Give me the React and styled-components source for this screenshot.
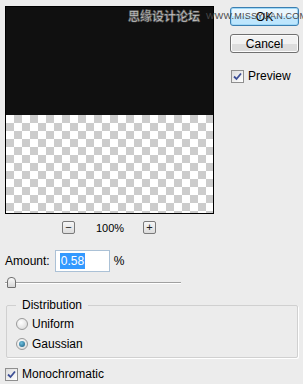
import styled, { createGlobalStyle } from "styled-components";

const GlobalStyle = createGlobalStyle`
  html, body {
    margin: 0;
    padding: 0;
    background: #ececec;
  }
  body {
    font-family: "Liberation Sans", Arial, sans-serif;
    font-size: 12px;
    color: #000;
  }
`;

const Dialog = styled.div`
  position: relative;
  width: 303px;
  height: 384px;
  box-sizing: border-box;
  padding: 6px 4px 0 5px;
  overflow: hidden;
`;

const TopRow = styled.div`
  display: flex;
  align-items: flex-start;
`;

const LeftCol = styled.div`
  width: 209px;
`;

const Preview = styled.div`
  width: 209px;
  height: 208px;
  box-sizing: border-box;
  border: 1px solid #000;
  display: flex;
  flex-direction: column;
`;

const Dark = styled.div`
  flex: 0 0 108px;
  background: #101010;
`;

const Checker = styled.div`
  flex: 1;
  background-color: #fff;
  background-image: conic-gradient(
    #cccccc 0 25%,
    #fff 0 50%,
    #cccccc 0 75%,
    #fff 0
  );
  background-size: 16px 16px;
`;

const ZoomBar = styled.div`
  display: flex;
  align-items: center;
  margin-top: 7px;
  padding-left: 57px;
  height: 13px;
`;

const ZoomButton = styled.div`
  width: 13px;
  height: 13px;
  box-sizing: border-box;
  border: 1px solid #7a7a7a;
  border-radius: 2px;
  background: linear-gradient(#f6f6f6, #dcdcdc);
  display: flex;
  align-items: center;
  justify-content: center;
  font-size: 11px;
  line-height: 1;
  color: #222;
  margin-right: ${(p) => p.gap || 0}px;
`;

const ZoomText = styled.span`
  font-size: 11px;
  width: 25px;
  margin-right: 22px;
  text-align: center;
`;

const RightCol = styled.div`
  display: flex;
  flex-direction: column;
  margin-left: 16px;
  padding-top: 1px;
  width: 70px;
`;

const Button = styled.div`
  height: 19px;
  box-sizing: border-box;
  border: 1px solid ${(p) => (p.primary ? "#3c7fb1" : "#707070")};
  border-radius: 3px;
  background: ${(p) =>
    p.primary
      ? "linear-gradient(#eaf6fd 0 50%, #bee6fd 50%)"
      : "linear-gradient(#f2f2f2 0 50%, #dddddd 50% 90%, #cfcfcf)"};
  box-shadow: ${(p) => (p.primary ? "inset 0 0 0 1px #9ed8f7" : "inset 0 0 0 1px #fcfcfc")};
  display: flex;
  align-items: center;
  justify-content: center;
  font-size: 12px;
  margin-bottom: 8px;
`;

const CheckRow = styled.label`
  display: flex;
  align-items: center;
  gap: 4px;
  margin: ${(p) => p.m || "0"};
  height: 14px;
`;

const Box = styled.span`
  width: 13px;
  height: 13px;
  box-sizing: border-box;
  border: 1px solid #8f8f8f;
  background: linear-gradient(135deg, #dcdcdc, #fff);
  display: flex;
  align-items: center;
  justify-content: center;
`;

const Check = () => (
  <Box>
    <svg width="9" height="9" viewBox="0 0 9 9">
      <path d="M1 4.5 L3.5 7 L8 1.5" stroke="#3d4f96" strokeWidth="1.8" fill="none" />
    </svg>
  </Box>
);

const AmountRow = styled.div`
  display: flex;
  align-items: center;
  margin-top: 16px;
`;

const Field = styled.div`
  width: 55px;
  height: 22px;
  box-sizing: border-box;
  margin-left: 5px;
  border: 1px solid #abc1d6;
  background: #fff;
  display: flex;
  align-items: center;
  padding-left: 4px;
`;

const Selected = styled.span`
  background: #3399ff;
  color: #fff;
  padding: 1px 1px;
  line-height: 14px;
`;

const Unit = styled.span`
  margin-left: 4px;
`;

const Slider = styled.div`
  position: relative;
  width: 176px;
  height: 12px;
  margin-top: 5px;
`;

const Track = styled.div`
  position: absolute;
  left: 0;
  right: 0;
  top: 5px;
  height: 2px;
  border-top: 1px solid #a0a0a0;
  background: #fff;
  box-sizing: border-box;
`;

const Thumb = styled.div`
  position: absolute;
  left: 2px;
  top: 0;
  width: 9px;
  height: 11px;
  box-sizing: border-box;
  border: 1px solid #707070;
  border-radius: 4px 4px 1px 1px;
  background: linear-gradient(#fafafa, #d6d6d6);
`;

const Group = styled.fieldset`
  margin: 9px 1px 0 1px;
  padding: 2px 8px 3px 9px;
  border: 1px solid #d0d0d0;
  box-shadow: 1px 1px 0 #fff;
  border-radius: 2px;
`;

const Legend = styled.legend`
  padding: 0 6px;
  font-size: 12px;
`;

const RadioRow = styled.div`
  display: flex;
  align-items: center;
  gap: 4px;
  height: 20px;
`;

const Radio = styled.span`
  width: 12px;
  height: 12px;
  box-sizing: border-box;
  border-radius: 50%;
  border: 1px solid #9a9a9a;
  background: radial-gradient(circle at 40% 35%, #fff, #d4d4d4);
  display: flex;
  align-items: center;
  justify-content: center;

  &::after {
    content: "";
    display: ${(p) => (p.on ? "block" : "none")};
    width: 6px;
    height: 6px;
    border-radius: 50%;
    background: radial-gradient(circle at 40% 35%, #6fc0de, #16597d);
  }
`;

const Watermark = styled.div`
  position: absolute;
  z-index: 2;
  left: 128px;
  top: 7px;
  width: 172px;
  display: flex;
  align-items: center;
  gap: 6px;
  white-space: nowrap;
  pointer-events: none;
`;

const WmCn = styled.span`
  flex-shrink: 0;
  font-family: "Noto Sans CJK SC", sans-serif;
  font-size: 12px;
  font-weight: 700;
  color: #c8c8c8;
  -webkit-text-stroke: 0.6px #5a5a5a;
`;

const WmEn = styled.span`
  flex-shrink: 0;
  font-family: "Liberation Sans", Arial, sans-serif;
  font-size: 9px;
  color: #4a4a4a;
  letter-spacing: 0.2px;
`;

export default function App() {
  return (
    <>
      <GlobalStyle />
      <Dialog>
        <TopRow>
          <LeftCol>
            <Preview>
              <Dark />
              <Checker />
            </Preview>
            <ZoomBar>
              <ZoomButton gap={21}>−</ZoomButton>
              <ZoomText>100%</ZoomText>
              <ZoomButton>+</ZoomButton>
            </ZoomBar>
          </LeftCol>
          <RightCol>
            <Button primary>OK</Button>
            <Button>Cancel</Button>
            <CheckRow m="8px 0 0 1px">
              <Check />
              Preview
            </CheckRow>
          </RightCol>
        </TopRow>

        <AmountRow>
          Amount:
          <Field>
            <Selected>0.58</Selected>
          </Field>
          <Unit>%</Unit>
        </AmountRow>
        <Slider>
          <Track />
          <Thumb />
        </Slider>

        <Group>
          <Legend>Distribution</Legend>
          <RadioRow>
            <Radio />
            Uniform
          </RadioRow>
          <RadioRow>
            <Radio on />
            Gaussian
          </RadioRow>
        </Group>

        <CheckRow m="9px 0 0 0">
          <Check />
          Monochromatic
        </CheckRow>

        <Watermark>
          <WmCn>思缘设计论坛</WmCn>
          <WmEn>WWW.MISSYUAN.COM</WmEn>
        </Watermark>
      </Dialog>
    </>
  );
}
